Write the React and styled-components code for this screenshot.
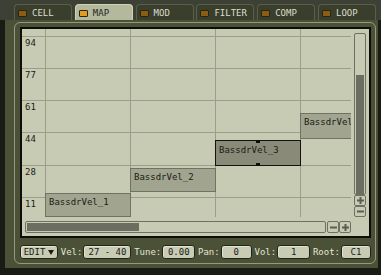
import React from "react";
import styled, { createGlobalStyle } from "styled-components";

const GlobalStyle = createGlobalStyle`
  html, body {
    margin: 0;
    padding: 0;
    background: #1a1b15;
  }
  body {
    font-family: "DejaVu Sans Mono", "Liberation Mono", monospace;
  }
`;

const tabs = [
  { name: "CELL" },
  { name: "MAP", active: true },
  { name: "MOD" },
  { name: "FILTER" },
  { name: "COMP" },
  { name: "LOOP" },
];

const rows = ["94", "77", "61", "44", "28", "11"];

const notes = [
  { name: "BassdrVel_1", left: 0, top: 164, height: 24 },
  { name: "BassdrVel_2", left: 85, top: 139, height: 24 },
  { name: "BassdrVel_3", left: 170, top: 111, height: 26, selected: true },
  { name: "BassdrVel_4", left: 255, top: 84, height: 26 },
];

const fields = [
  { label: "Vel:", value: "27 - 40", width: 48 },
  { label: "Tune:", value: "0.00", width: 33 },
  { label: "Pan:", value: "0", width: 31 },
  { label: "Vol:", value: "1", width: 33 },
  { label: "Root:", value: "C1", width: 30 },
];

function PlusIcon() {
  return (
    <svg width="7" height="7" viewBox="0 0 7 7">
      <path d="M0 3.5h7M3.5 0v7" stroke="#5a5d4f" strokeWidth="2" />
    </svg>
  );
}

function MinusIcon() {
  return (
    <svg width="7" height="7" viewBox="0 0 7 7">
      <path d="M0 3.5h7" stroke="#5a5d4f" strokeWidth="2" />
    </svg>
  );
}

function App() {
  return (
    <Screen>
      <GlobalStyle />
      <TabBar>
        {tabs.map((tab) => (
          <Tab key={tab.name} $active={tab.active}>
            <Led $active={tab.active} />
            <span>{tab.name}</span>
          </Tab>
        ))}
      </TabBar>
      <Panel>
        <Frame>
          <Content>
            <TopArea>
              <Plot>
                <Spacer />
                {rows.map((row) => (
                  <Row key={row}>
                    <RowLabel>{row}</RowLabel>
                  </Row>
                ))}
                <NoteLayer>
                  {notes.map((note) => (
                    <Note
                      key={note.name}
                      $left={note.left}
                      $top={note.top}
                      $height={note.height}
                      $selected={note.selected}
                    >
                      {note.name}
                      {note.selected && (
                        <>
                          <Handle $top />
                          <Handle />
                        </>
                      )}
                    </Note>
                  ))}
                </NoteLayer>
              </Plot>
              <VScroll>
                <VTrack>
                  <VThumb />
                </VTrack>
                <ScrollButton>
                  <PlusIcon />
                </ScrollButton>
                <ScrollButton>
                  <MinusIcon />
                </ScrollButton>
              </VScroll>
            </TopArea>
            <HScroll>
              <HTrack>
                <HThumb />
              </HTrack>
              <ScrollButton>
                <MinusIcon />
              </ScrollButton>
              <ScrollButton>
                <PlusIcon />
              </ScrollButton>
            </HScroll>
          </Content>
          <Toolbar>
            <ValueBox $width={38}>
              EDIT
              <svg width="6" height="5" viewBox="0 0 6 5" style={{ marginLeft: 3 }}>
                <path d="M0 0h6L3 5z" fill="#1b1b15" />
              </svg>
            </ValueBox>
            {fields.map((field) => (
              <Group key={field.label}>
                <FieldLabel>{field.label}</FieldLabel>
                <ValueBox $width={field.width}>{field.value}</ValueBox>
              </Group>
            ))}
          </Toolbar>
        </Frame>
      </Panel>
    </Screen>
  );
}

const Screen = styled.div`
  width: 381px;
  height: 275px;
  overflow: hidden;
  background: #1a1b15;
`;

const TabBar = styled.div`
  display: flex;
  align-items: flex-start;
  gap: 2.8px;
  height: 20px;
  box-sizing: border-box;
  padding: 4px 0 0 14px;
  background: #3d4034;
`;

const Tab = styled.div`
  display: flex;
  align-items: center;
  gap: 5px;
  width: 58px;
  height: 16px;
  box-sizing: border-box;
  padding: 1px 0 0 3px;
  border: 1px solid ${(p) => (p.$active ? "#cfd2b8" : "#5a5f49")};
  border-bottom: none;
  border-radius: 4px 4px 0 0;
  background: ${(p) => (p.$active ? "#b4b89d" : "#3a3f2d")};
  color: ${(p) => (p.$active ? "#26271f" : "#dcdccb")};
  font-size: 9px;
  line-height: 9px;
`;

const Led = styled.div`
  width: 9px;
  height: 7px;
  box-sizing: border-box;
  border: 1px solid #2a2410;
  border-radius: 1px;
  background: ${(p) => (p.$active ? "#e39c1c" : "#8a5e12")};
`;

const Panel = styled.div`
  width: 373px;
  height: 248px;
  margin-left: 5px;
  box-sizing: border-box;
  padding: 2px 0 0 9px;
  background: #4b5137;
`;

const Frame = styled.div`
  display: flex;
  flex-direction: column;
  width: 362px;
  height: 242px;
  box-sizing: border-box;
  padding: 4px 4px 4px 5px;
  border: 1px solid #959a7e;
  border-radius: 6px;
`;

const Content = styled.div`
  display: flex;
  flex-direction: column;
  height: 211px;
  box-sizing: border-box;
  border: 2px solid #0d0d0a;
  background: #c8cbb4;
`;

const TopArea = styled.div`
  display: flex;
  height: 188px;
`;

const Plot = styled.div`
  position: relative;
  display: flex;
  flex-direction: column;
  width: 329px;
  overflow: hidden;
  background-image: linear-gradient(to right, #9b9e88 1px, transparent 1px);
  background-size: 85px 100%;
  background-position: 23px 0;
`;

const Spacer = styled.div`
  flex-shrink: 0;
  height: 7px;
`;

const Row = styled.div`
  flex-shrink: 0;
  height: 32.14px;
  box-sizing: border-box;
  border-top: 1px solid #9b9e88;
`;

const RowLabel = styled.div`
  padding: 2px 0 0 3px;
  font-size: 9px;
  line-height: 9px;
  color: #1c1c16;
`;

const NoteLayer = styled.div`
  position: absolute;
  top: 0;
  left: 23px;
  right: 0;
  bottom: 0;
`;

const Note = styled.div`
  position: absolute;
  left: ${(p) => p.$left}px;
  top: ${(p) => p.$top}px;
  width: 86px;
  height: ${(p) => p.$height}px;
  box-sizing: border-box;
  padding: ${(p) => (p.$selected ? "5px" : "4px")} 0 0 3px;
  border: 1px solid ${(p) => (p.$selected ? "#121210" : "#707361")};
  background: ${(p) => (p.$selected ? "#898b78" : "#a1a48f")};
  color: #1b1b15;
  font-size: 9px;
  line-height: 9px;
  white-space: nowrap;
`;

const Handle = styled.div`
  position: absolute;
  left: 40px;
  ${(p) => (p.$top ? "top: -1px;" : "bottom: -1px;")}
  width: 4px;
  height: 3px;
  background: #0d0d0a;
`;

const VScroll = styled.div`
  display: flex;
  flex-direction: column;
  width: 12px;
  margin: 4px 3px 0 3px;
`;

const VTrack = styled.div`
  height: 162px;
  box-sizing: border-box;
  padding: 41px 1px 0;
  border: 1px solid #6e7162;
  border-radius: 2px;
`;

const VThumb = styled.div`
  height: 119px;
  background: #6b6e60;
`;

const ScrollButton = styled.div`
  display: flex;
  align-items: center;
  justify-content: center;
  width: 12px;
  height: 11px;
  flex-shrink: 0;
  box-sizing: border-box;
  border: 1px solid #6e7162;
  border-radius: 2px;
`;

const HScroll = styled.div`
  display: flex;
  gap: 0;
  width: 326px;
  height: 12px;
  margin: 4px 0 0 3px;

  ${ScrollButton} {
    height: 12px;
  }
`;

const HTrack = styled.div`
  flex: 1;
  margin-right: 1px;
  box-sizing: border-box;
  padding: 1px;
  border: 1px solid #6e7162;
  border-radius: 2px;
`;

const HThumb = styled.div`
  width: 112px;
  height: 100%;
  background: #6b6e60;
`;

const Toolbar = styled.div`
  display: flex;
  align-items: center;
  justify-content: space-between;
  height: 14px;
  margin-top: 7px;
`;

const Group = styled.div`
  display: flex;
  align-items: center;
  gap: 1px;
`;

const FieldLabel = styled.span`
  color: #e4e5d6;
  font-size: 9px;
  line-height: 9px;
`;

const ValueBox = styled.div`
  display: flex;
  align-items: center;
  justify-content: center;
  width: ${(p) => p.$width}px;
  height: 14px;
  box-sizing: border-box;
  border: 1px solid #23251b;
  border-radius: 3px;
  background: #c9ccb5;
  box-shadow: inset 1px 1px 0 #e2e4d2;
  color: #1b1b15;
  font-size: 9px;
  line-height: 9px;
`;

export default App;
